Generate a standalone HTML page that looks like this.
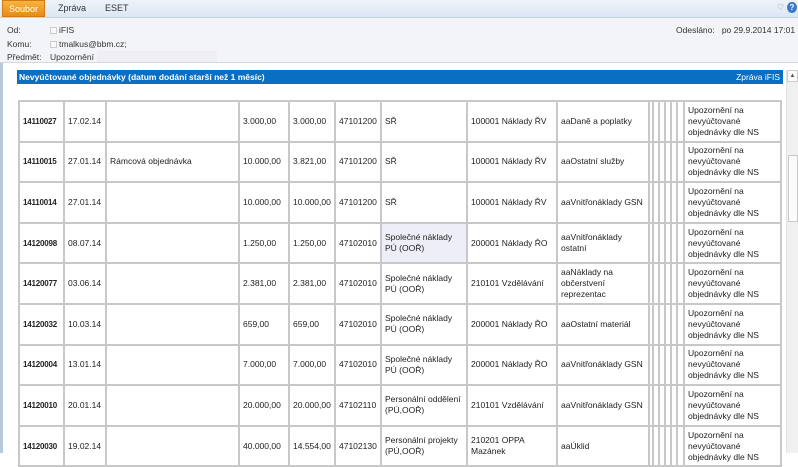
<!DOCTYPE html>
<html><head><meta charset="utf-8">
<style>
*{margin:0;padding:0;box-sizing:border-box}
body{width:798px;height:453px;overflow:hidden;background:#fff;font-family:"Liberation Sans",Arial,sans-serif;position:relative;color:#222}
.tabs{position:absolute;left:0;top:0;width:798px;height:18px;background:linear-gradient(#eef3fa,#dde7f3);border-bottom:1px solid #c5d2e2}
.tab{position:absolute;top:3px;font-size:9px;color:#333}
.soubor{position:absolute;left:2px;top:0;width:43px;height:17px;background:linear-gradient(#f7b33f,#e98b16);color:#fff;font-size:9px;text-align:center;line-height:16px;border:1px solid #d07a10}
.hdr{position:absolute;left:0;top:18px;width:798px;height:45px;background:#f2f4f7;border-bottom:1px solid #d4d9e0}
.hl{position:absolute;font-size:8.5px;color:#333}
.ck{display:inline-block;width:7px;height:7px;border:1px solid #ccc;background:#f8f8f8;margin-right:2px;vertical-align:-1px}
.leftb{position:absolute;left:0;top:63px;width:3px;height:390px;background:#b8c8dc}
.bar{position:absolute;left:17px;top:70px;width:766px;height:14px;background:#0a6fc2;color:#fff;font-size:8.5px;font-weight:bold;line-height:14px;padding-left:2px}
.bar span{position:absolute;right:3px;top:0;font-weight:normal}
.sb{position:absolute;left:786px;top:70px;width:12px;height:383px;background:#f0f0f0;border-left:1px solid #e2e2e2}
.sbu{position:absolute;left:787px;top:70px;width:11px;height:12px;background:#fafafa;border:1px solid #ccc;font-size:6px;text-align:center;line-height:10px;color:#555}
.thumb{position:absolute;left:788px;top:155px;width:10px;height:67px;background:#fbfbfb;border:1px solid #c8c8c8}
table{position:absolute;left:18px;top:100px;width:764px;border-collapse:separate;border-spacing:0;table-layout:fixed;border:1px solid #c8c8c8}
td{border:1px solid #c8c8c8;font-size:8.5px;padding:0 2px 0 3px;vertical-align:middle;height:40.6px;overflow:hidden;line-height:11px;color:#222}
td.b{font-weight:bold;font-size:8px;letter-spacing:-0.2px}
td.t{padding:0}
.sh{background:#eeeef9}
</style></head><body>
<div class="tabs">
<div class="soubor">Soubor</div>
<div class="tab" style="left:58px">Zpráva</div>
<div class="tab" style="left:105px">ESET</div>
<div style="position:absolute;right:14px;top:3px;font-size:8px;color:#888">♡</div>
<div style="position:absolute;right:1px;top:2px;width:10px;height:11px;border-radius:50%;background:#3a78c8;color:#fff;font-size:8px;text-align:center;line-height:11px;font-weight:bold">?</div>
</div>
<div class="hdr">
<div class="hl" style="left:7px;top:7px">Od:</div>
<div class="hl" style="left:50px;top:7px"><span class="ck"></span>iFIS</div>
<div class="hl" style="left:7px;top:21px">Komu:</div>
<div class="hl" style="left:50px;top:21px"><span class="ck"></span>tmalkus@bbm.cz;</div>
<div class="hl" style="left:7px;top:34px">Předmět:</div>
<div class="hl" style="left:50px;top:34px">Upozornění</div>
<div style="position:absolute;left:97px;top:33px;width:120px;height:11px;background:#efeef4"></div>
<div class="hl" style="left:676px;top:7px">Odesláno:&nbsp;&nbsp; po 29.9.2014 17:01</div>
</div>
<div class="leftb"></div>
<div class="bar">Nevyúčtované objednávky (datum dodání starší než 1 měsíc)<span>Zpráva iFIS</span></div>
<div class="sb"></div><div class="sbu">▲</div><div class="thumb"></div>
<table>
<colgroup><col style="width:45px"><col style="width:42px"><col style="width:133px"><col style="width:50px"><col style="width:46px"><col style="width:46px"><col style="width:86px"><col style="width:90px"><col style="width:92px"><col style="width:4px"><col style="width:6px"><col style="width:6px"><col style="width:6px"><col style="width:6px"><col style="width:7px"><col style="width:97px"></colgroup>
<tr><td class="b">14110027</td><td>17.02.14</td><td></td><td>3.000,00</td><td>3.000,00</td><td>47101200</td><td>SŘ</td><td>100001 Náklady ŘV</td><td>aaDaně a poplatky</td><td class="t"></td><td class="t"></td><td class="t"></td><td class="t"></td><td class="t"></td><td class="t"></td><td>Upozornění na nevyúčtované objednávky dle NS</td></tr>
<tr><td class="b">14110015</td><td>27.01.14</td><td>Rámcová objednávka</td><td>10.000,00</td><td>3.821,00</td><td>47101200</td><td>SŘ</td><td>100001 Náklady ŘV</td><td>aaOstatní služby</td><td class="t"></td><td class="t"></td><td class="t"></td><td class="t"></td><td class="t"></td><td class="t"></td><td>Upozornění na nevyúčtované objednávky dle NS</td></tr>
<tr><td class="b">14110014</td><td>27.01.14</td><td></td><td>10.000,00</td><td>10.000,00</td><td>47101200</td><td>SŘ</td><td>100001 Náklady ŘV</td><td>aaVnitřonáklady GSN</td><td class="t"></td><td class="t"></td><td class="t"></td><td class="t"></td><td class="t"></td><td class="t"></td><td>Upozornění na nevyúčtované objednávky dle NS</td></tr>
<tr><td class="b">14120098</td><td>08.07.14</td><td></td><td>1.250,00</td><td>1.250,00</td><td>47102010</td><td class="sh">Společné náklady PÚ (OOŘ)</td><td>200001 Náklady ŘO</td><td>aaVnitřonáklady ostatní</td><td class="t"></td><td class="t"></td><td class="t"></td><td class="t"></td><td class="t"></td><td class="t"></td><td>Upozornění na nevyúčtované objednávky dle NS</td></tr>
<tr><td class="b">14120077</td><td>03.06.14</td><td></td><td>2.381,00</td><td>2.381,00</td><td>47102010</td><td>Společné náklady PÚ (OOŘ)</td><td>210101 Vzdělávání</td><td>aaNáklady na občerstvení reprezentac</td><td class="t"></td><td class="t"></td><td class="t"></td><td class="t"></td><td class="t"></td><td class="t"></td><td>Upozornění na nevyúčtované objednávky dle NS</td></tr>
<tr><td class="b">14120032</td><td>10.03.14</td><td></td><td>659,00</td><td>659,00</td><td>47102010</td><td>Společné náklady PÚ (OOŘ)</td><td>200001 Náklady ŘO</td><td>aaOstatní materiál</td><td class="t"></td><td class="t"></td><td class="t"></td><td class="t"></td><td class="t"></td><td class="t"></td><td>Upozornění na nevyúčtované objednávky dle NS</td></tr>
<tr><td class="b">14120004</td><td>13.01.14</td><td></td><td>7.000,00</td><td>7.000,00</td><td>47102010</td><td>Společné náklady PÚ (OOŘ)</td><td>200001 Náklady ŘO</td><td>aaVnitřonáklady GSN</td><td class="t"></td><td class="t"></td><td class="t"></td><td class="t"></td><td class="t"></td><td class="t"></td><td>Upozornění na nevyúčtované objednávky dle NS</td></tr>
<tr><td class="b">14120010</td><td>20.01.14</td><td></td><td>20.000,00</td><td>20.000,00</td><td>47102110</td><td>Personální oddělení (PÚ,OOŘ)</td><td>210101 Vzdělávání</td><td>aaVnitřonáklady GSN</td><td class="t"></td><td class="t"></td><td class="t"></td><td class="t"></td><td class="t"></td><td class="t"></td><td>Upozornění na nevyúčtované objednávky dle NS</td></tr>
<tr><td class="b">14120030</td><td>19.02.14</td><td></td><td>40.000,00</td><td>14.554,00</td><td>47102130</td><td>Personální projekty (PÚ,OOŘ)</td><td>210201 OPPA Mazánek</td><td>aaÚklid</td><td class="t"></td><td class="t"></td><td class="t"></td><td class="t"></td><td class="t"></td><td class="t"></td><td>Upozornění na nevyúčtované objednávky dle NS</td></tr>
</table>
</body></html>
